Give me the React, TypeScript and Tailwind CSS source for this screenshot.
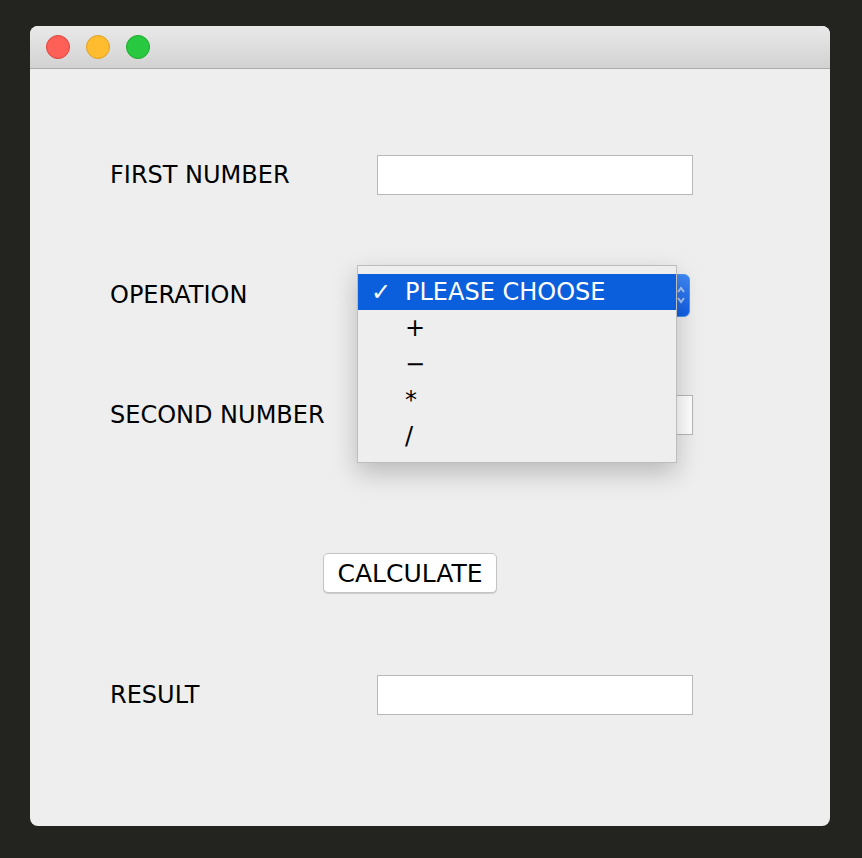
import React from 'react';

const font = { fontFamily: '"DejaVu Sans", Verdana, sans-serif' };

const Field: React.FC = () => (
  <div className="w-[316px] h-[40px] bg-white border border-[#b8b8b8]" />
);

const Row: React.FC<{ label: string; className?: string; children: React.ReactNode }> = ({ label, className, children }) => (
  <div className={`flex items-center h-[40px] ${className ?? ''}`}>
    <div className="w-[267px] text-[24px] text-black leading-none">{label}</div>
    {children}
  </div>
);

const options = ['+', '−', '*', '/'];

export default function App() {
  return (
    <div className="w-[862px] h-[858px] bg-[#232320] pt-[26px] pl-[30px]" style={font}>
      <div className="relative w-[800px] h-[800px] rounded-[8px] overflow-hidden bg-[#eeeeee]">
        {/* title bar */}
        <div className="h-[43px] flex items-center gap-[16px] pl-[16px] bg-gradient-to-b from-[#e9e9e9] to-[#d2d2d2] border-b border-[#acacac]">
          <span className="w-[24px] h-[24px] rounded-full bg-[#fe5f57] border border-[#e0443e]" />
          <span className="w-[24px] h-[24px] rounded-full bg-[#febc2e] border border-[#dea123]" />
          <span className="w-[24px] h-[24px] rounded-full bg-[#28c840] border border-[#1aab29]" />
        </div>

        <div className="flex flex-col pt-[86px] pl-[80px]">
          <Row label="FIRST NUMBER">
            <Field />
          </Row>
          <Row label="OPERATION" className="mt-[80px]">
            <div className="-ml-[20px] w-[333px] h-[43px] rounded-[6px] bg-gradient-to-b from-[#3f88f6] to-[#0f5ee6] border border-[#4d92f2] flex items-center justify-end pr-[3px]">
              <svg width="10" height="22" viewBox="0 0 10 22" fill="none" stroke="#ffffff" strokeWidth="2" opacity="0.6">
                <path d="M2 8 L5 4 L8 8" />
                <path d="M2 14 L5 18 L8 14" />
              </svg>
            </div>
          </Row>
          <Row label="SECOND NUMBER" className="mt-[80px]">
            <Field />
          </Row>
          <div className="flex items-center h-[40px] mt-[118px]">
            <button className="ml-[213px] w-[174px] h-[40px] bg-white border border-[#c4c4c4] rounded-[5px] shadow-[0_1px_1px_rgba(0,0,0,0.15)] text-[25px] leading-none text-black">
              CALCULATE
            </button>
          </div>
          <Row label="RESULT" className="mt-[82px]">
            <Field />
          </Row>
        </div>

        {/* open combo popup */}
        <div className="absolute left-[327px] top-[239px] w-[320px] h-[198px] bg-[#eeeeee] border border-[#bdbdbd] shadow-[0_10px_24px_rgba(0,0,0,0.22)] py-[8px]">
          <div className="h-[36px] bg-[#0b5fdc] flex items-center text-white text-[24px] leading-none">
            <span className="w-[47px] pl-[13px] font-bold">✓</span>
            <span>PLEASE CHOOSE</span>
          </div>
          {options.map((o) => (
            <div key={o} className="h-[36px] flex items-center text-black text-[24px] leading-none pl-[47px]">
              {o}
            </div>
          ))}
        </div>
      </div>
    </div>
  );
}
